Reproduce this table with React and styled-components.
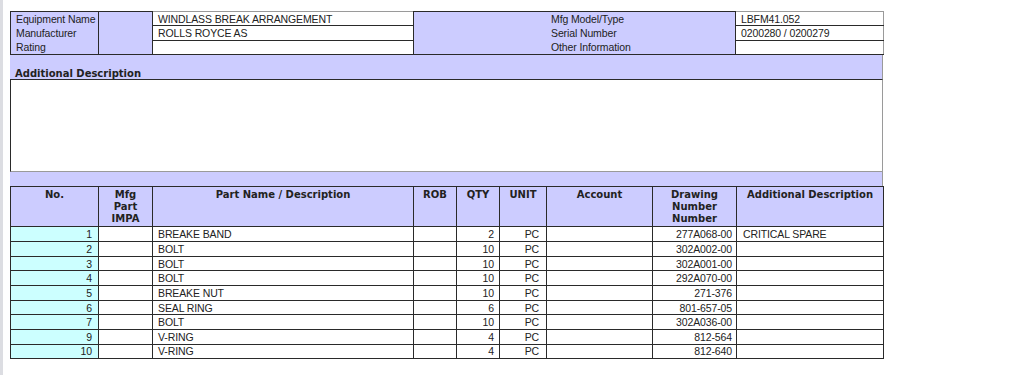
import React from 'react'
import styled, { createGlobalStyle } from 'styled-components'

// Colours taken from the screenshot
const purple = '#ccccff'
const cyan = '#ccffff'
const dark = '#2a2a2a'
const grey = '#9a9a9a'

const GlobalStyle = createGlobalStyle`
  html, body {
    margin: 0;
    padding: 0;
    background: #ffffff;
  }
  body {
    font-family: "Liberation Sans", Arial, sans-serif;
    font-size: 10.5px;
    letter-spacing: -0.12px;
    color: #222;
  }
`

const Page = styled.div`
  min-height: 100vh;
  box-sizing: border-box;
  border-left: 3px solid #dcdde2;
  padding: 11px 0 0 7px;
`

const Sheet = styled.div`
  width: 873px;
`

// bold text in this sheet is wider, like Tahoma Bold
const boldFont = `
  font-family: "DejaVu Sans", Verdana, sans-serif;
  font-size: 10px;
  letter-spacing: 0;
  font-weight: bold;
`

// Equipment info block
const InfoTable = styled.table`
  width: 873px;
  border-collapse: collapse;
  table-layout: fixed;
  border: 1px solid ${dark};
  border-right-color: ${grey};
`

const LabelCell = styled.td`
  background: ${purple};
  border: 1px solid ${dark};
  vertical-align: top;
  padding: 1px 5px 0;
  padding-left: ${p => p.$indent || 5}px;
  line-height: 13.8px;
  white-space: nowrap;
`

const ValueCell = styled.td`
  background: #fff;
  border-left: 1px solid ${dark};
  border-right: 1px solid ${p => (p.$last ? grey : dark)};
  border-top: 1px solid ${grey};
  border-bottom: 1px solid ${dark};
  height: 13px;
  padding: 0 5px;
  line-height: 12px;
  white-space: nowrap;
`

const Band = styled.div`
  ${boldFont}
  background: ${purple};
  border-bottom: 1px solid ${dark};
  height: 25px;
  box-sizing: border-box;
  padding: 13px 5px 0;
  line-height: 12px;
  border-right: 1px solid ${grey};
`

const DescBox = styled.div`
  height: 91px;
  background: #fff;
  border-left: 1px solid ${dark};
  border-right: 1px solid ${grey};
  border-bottom: 1px solid ${grey};
`

const Spacer = styled.div`
  height: 14px;
  background: ${purple};
  border-right: 1px solid ${grey};
`

// Parts list
const PartsTable = styled.table`
  width: 873px;
  border-collapse: collapse;
  table-layout: fixed;
  border: 1px solid ${dark};
  border-right-color: ${grey};
`

const Head = styled.th`
  ${boldFont}
  background: ${purple};
  border: 1px solid ${dark};
  vertical-align: top;
  text-align: center;
  padding: 2px 3px 1px;
  height: 35px;
  box-sizing: border-box;
  line-height: 12px;
`

const Cell = styled.td`
  background: ${p => p.$bg || '#fff'};
  border-left: 1px solid ${dark};
  border-right: 1px solid ${dark};
  border-top: 1px solid ${grey};
  border-bottom: 1px solid ${dark};
  text-align: ${p => p.$align || 'left'};
  padding: 0 ${p => p.$pr || 5}px 0 ${p => p.$pl || 5}px;
  height: 13.67px;
  line-height: 12px;
  white-space: nowrap;
  overflow: hidden;
`

const widths = [88, 54, 261, 43, 43, 47, 106, 84, 147]

const parts = [
  { no: 1, name: 'BREAKE BAND', qty: 2, drawing: '277A068-00', note: 'CRITICAL SPARE' },
  { no: 2, name: 'BOLT', qty: 10, drawing: '302A002-00' },
  { no: 3, name: 'BOLT', qty: 10, drawing: '302A001-00' },
  { no: 4, name: 'BOLT', qty: 10, drawing: '292A070-00' },
  { no: 5, name: 'BREAKE NUT', qty: 10, drawing: '271-376' },
  { no: 6, name: 'SEAL RING', qty: 6, drawing: '801-657-05' },
  { no: 7, name: 'BOLT', qty: 10, drawing: '302A036-00' },
  { no: 9, name: 'V-RING', qty: 4, drawing: '812-564' },
  { no: 10, name: 'V-RING', qty: 4, drawing: '812-640' },
]

export default function App() {
  return (
    <Page>
      <GlobalStyle />
      <Sheet>
        <InfoTable>
          <colgroup>
            <col style={{ width: 88 }} />
            <col style={{ width: 54 }} />
            <col style={{ width: 261 }} />
            <col style={{ width: 322 }} />
            <col style={{ width: 148 }} />
          </colgroup>
          <tbody>
            <tr>
              <LabelCell rowSpan={3}>
                Equipment Name<br />Manufacturer<br />Rating
              </LabelCell>
              <LabelCell rowSpan={3} />
              <ValueCell>WINDLASS BREAK ARRANGEMENT</ValueCell>
              <LabelCell rowSpan={3} $indent={137}>
                Mfg Model/Type<br />Serial Number<br />Other Information
              </LabelCell>
              <ValueCell $last>LBFM41.052</ValueCell>
            </tr>
            <tr>
              <ValueCell>ROLLS ROYCE AS</ValueCell>
              <ValueCell $last>0200280 / 0200279</ValueCell>
            </tr>
            <tr>
              <ValueCell />
              <ValueCell $last />
            </tr>
          </tbody>
        </InfoTable>

        <Band>Additional Description</Band>
        <DescBox />
        <Spacer />

        <PartsTable>
          <colgroup>
            {widths.map((w, i) => (
              <col key={i} style={{ width: w }} />
            ))}
          </colgroup>
          <thead>
            <tr>
              <Head>No.</Head>
              <Head>Mfg<br />Part<br />IMPA</Head>
              <Head>Part Name / Description</Head>
              <Head>ROB</Head>
              <Head>QTY</Head>
              <Head>UNIT</Head>
              <Head>Account</Head>
              <Head>Drawing<br />Number<br />Number</Head>
              <Head>Additional Description</Head>
            </tr>
          </thead>
          <tbody>
            {parts.map(p => (
              <tr key={p.no}>
                <Cell $bg={cyan} $align="right" $pr={6}>{p.no}</Cell>
                <Cell />
                <Cell>{p.name}</Cell>
                <Cell />
                <Cell $align="right">{p.qty}</Cell>
                <Cell $align="right" $pr={7}>PC</Cell>
                <Cell />
                <Cell $align="right" $pr={4}>{p.drawing}</Cell>
                <Cell $pl={6}>{p.note}</Cell>
              </tr>
            ))}
          </tbody>
        </PartsTable>
      </Sheet>
    </Page>
  )
}
